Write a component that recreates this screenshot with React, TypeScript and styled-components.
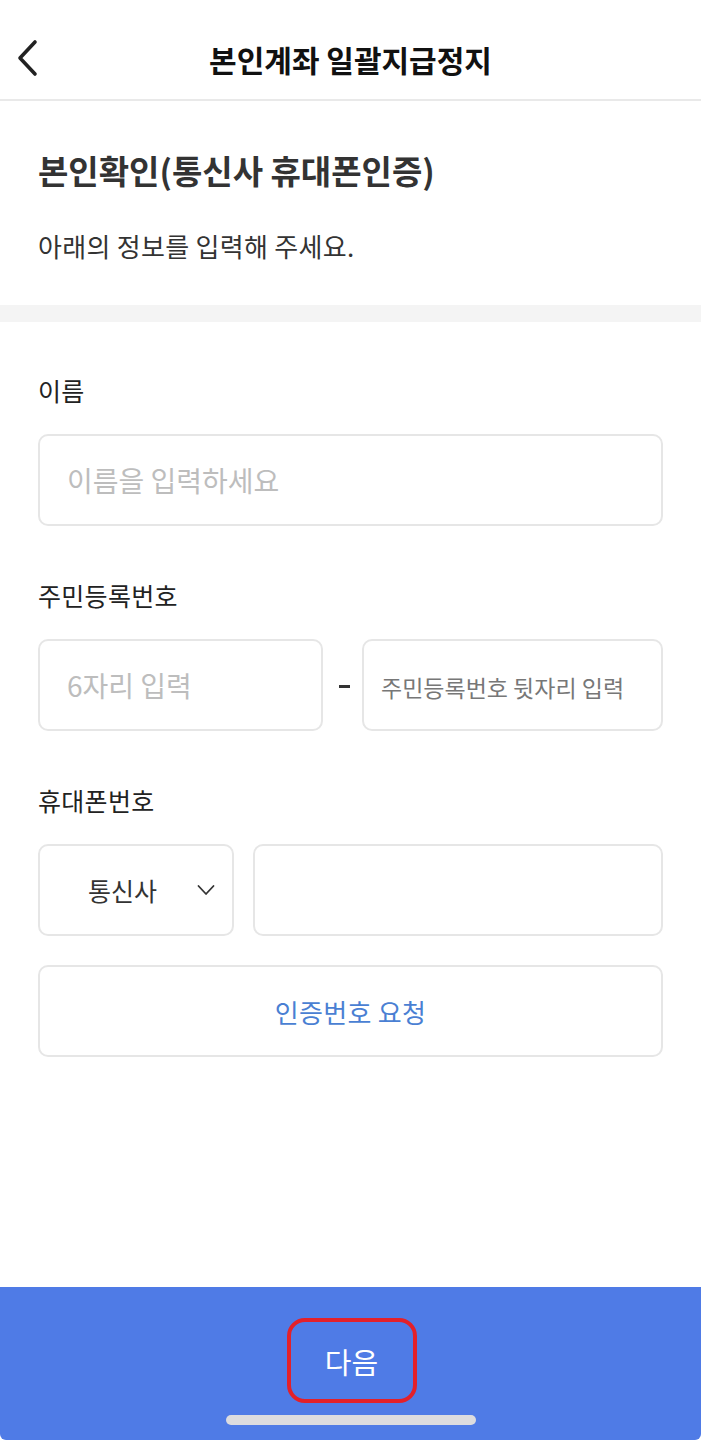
import React from "react";
import styled, { createGlobalStyle } from "styled-components";

const Global = createGlobalStyle`
  html, body { margin: 0; padding: 0; background: #fff; }
  body { font-family: "Noto Sans CJK KR", "Noto Sans", sans-serif; color: #222; }
  * { box-sizing: border-box; }
`;

const Page = styled.div`
  width: 701px;
  min-height: 1440px;
  display: flex;
  flex-direction: column;
  background: #fff;
`;

const Header = styled.header`
  height: 101px;
  border-bottom: 2px solid #e9e9e9;
  display: flex;
  align-items: center;
  justify-content: center;
  position: relative;
`;

const BackButton = styled.button`
  position: absolute;
  left: 10px;
  top: 33px;
  width: 36px;
  height: 50px;
  border: none;
  background: none;
  padding: 0;
  display: flex;
  align-items: center;
  justify-content: center;
`;

const HeaderTitle = styled.h1`
  margin: 0;
  font-size: 30px;
  font-weight: 600;
  color: #111;
  line-height: 40px;
  padding-top: 18px;
`;

const Intro = styled.section`
  padding: 49px 38px 44px;
`;

const IntroTitle = styled.h2`
  margin: 0;
  font-size: 33px;
  font-weight: 700;
  color: #333;
  line-height: 40px;
`;

const IntroText = styled.p`
  margin: 41px 0 0;
  font-size: 26px;
  font-weight: 400;
  color: #333;
  line-height: 30px;
  letter-spacing: 0.3px;
`;

const Band = styled.div`
  height: 17px;
  background: #f4f4f4;
`;

const Form = styled.section`
  padding: 53px 38px 0;
  display: flex;
  flex-direction: column;
  gap: 54px;
`;

const Field = styled.div`
  display: flex;
  flex-direction: column;
  gap: 29px;
`;

const Label = styled.label`
  font-size: 25px;
  line-height: 30px;
  color: #222;
  letter-spacing: 0.3px;
`;

const Row = styled.div`
  display: flex;
  align-items: center;
`;

const Input = styled.input<{ $small?: boolean; $width?: number }>`
  display: block;
  height: 92px;
  border: 2px solid #e6e6e6;
  border-radius: 10px;
  padding: 0 ${(p) => (p.$small ? 17 : 27)}px;
  font-family: inherit;
  font-size: 28px;
  color: #222;
  background: #fff;
  outline: none;
  min-width: 0;
  width: ${(p) => (p.$width ? `${p.$width}px` : "100%")};
  flex: ${(p) => (p.$width ? "none" : "1 1 auto")};
  &::placeholder {
    color: ${(p) => (p.$small ? "#777" : "#bdbdbd")};
    font-size: ${(p) => (p.$small ? 23 : 28)}px;
  }
`;

const Dash = styled.span`
  width: 11px;
  height: 3px;
  background: #333;
  flex: none;
  margin: 2px 12px 0 16px;
`;

const Select = styled.div`
  width: 196px;
  height: 92px;
  flex: none;
  margin-right: 19px;
  border: 2px solid #e6e6e6;
  border-radius: 10px;
  display: flex;
  align-items: center;
  padding-left: 48px;
  gap: 40px;
  font-size: 25px;
  color: #333;
`;

const OutlineButton = styled.button`
  display: block;
  height: 92px;
  width: 100%;
  margin-top: 29px;
  border: 2px solid #e6e6e6;
  border-radius: 10px;
  background: #fff;
  font-family: inherit;
  font-size: 26px;
  color: #4a7fd3;
  letter-spacing: 0.3px;
`;

const BottomBar = styled.footer`
  margin-top: auto;
  height: 153px;
  background: #4f7be6;
  border-radius: 0 0 6px 6px;
  display: flex;
  flex-direction: column;
  align-items: center;
  padding-top: 31px;
`;

const NextButton = styled.button`
  width: 130px;
  height: 85px;
  border: 4px solid #e3202a;
  border-radius: 18px;
  background: transparent;
  font-family: inherit;
  font-size: 29px;
  color: #fff;
  margin-left: 2px;
`;

const HomeIndicator = styled.div`
  margin-top: 12px;
  width: 250px;
  height: 10px;
  border-radius: 5px;
  background: #dcdcdf;
`;

export default function App() {
  return (
    <Page>
      <Global />
      <Header>
        <BackButton aria-label="back">
          <svg width="24" height="38" viewBox="0 0 24 38" fill="none">
            <path d="M19 3 L4 19 L19 35" stroke="#222" strokeWidth="3.6" strokeLinecap="round" strokeLinejoin="round" />
          </svg>
        </BackButton>
        <HeaderTitle>본인계좌 일괄지급정지</HeaderTitle>
      </Header>
      <Intro>
        <IntroTitle>본인확인(통신사 휴대폰인증)</IntroTitle>
        <IntroText>아래의 정보를 입력해 주세요.</IntroText>
      </Intro>
      <Band />
      <Form>
        <Field>
          <Label>이름</Label>
          <Input placeholder="이름을 입력하세요" />
        </Field>
        <Field>
          <Label>주민등록번호</Label>
          <Row>
            <Input $width={285} placeholder="6자리 입력" />
            <Dash />
            <Input $small placeholder="주민등록번호 뒷자리 입력" />
          </Row>
        </Field>
        <Field>
          <Label>휴대폰번호</Label>
          <div>
            <Row>
              <Select>
                <span>통신사</span>
                <svg width="18" height="12" viewBox="0 0 18 12" fill="none">
                  <path d="M1.5 2 L9 10 L16.5 2" stroke="#333" strokeWidth="1.8" strokeLinecap="round" strokeLinejoin="round" />
                </svg>
              </Select>
              <Input />
            </Row>
            <OutlineButton>인증번호 요청</OutlineButton>
          </div>
        </Field>
      </Form>
      <BottomBar>
        <NextButton>다음</NextButton>
        <HomeIndicator />
      </BottomBar>
    </Page>
  );
}
